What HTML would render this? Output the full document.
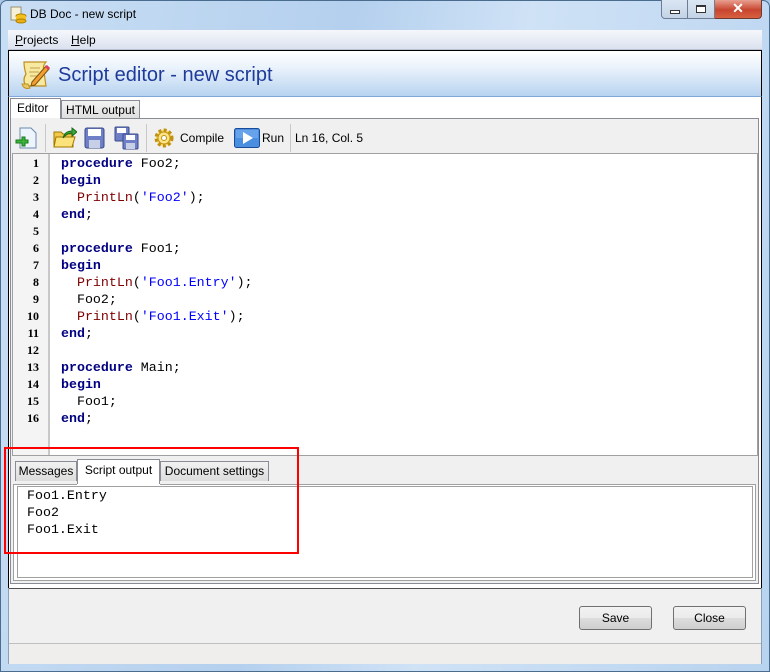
<!DOCTYPE html>
<html><head><meta charset="utf-8"><style>
*{box-sizing:border-box;margin:0;padding:0}
body{width:770px;height:672px;overflow:hidden;font-family:"Liberation Sans",sans-serif;font-size:12px;position:relative;background:#a9c8e8}
.frame{position:absolute;left:0;top:0;width:770px;height:672px;border:1px solid #4a6c8e;border-radius:7px 7px 0 0;background:linear-gradient(100deg,#c9def4 0%,#b4d0ee 40%,#cfe2f6 60%,#b8d3ef 100%)}
.abs{position:absolute}
.title{left:30px;top:7px;font-size:12px;color:#000}
.client{left:8px;top:30px;width:754px;height:634px;background:#f0f0f0;border:1px solid #8aa0b8}
.menu{left:8px;top:30px;width:754px;height:20px;background:linear-gradient(#f5f7fb,#dbe2ef);border-bottom:1px solid #b8c2d2}
.menu span{position:absolute;top:3px;font-size:12px}
.header{left:8px;top:50px;width:754px;height:47px;border:1px solid #000;border-bottom:none;background:linear-gradient(#fff 0%,#e8f1fb 40%,#b7d3f0 100%);border-bottom:1px solid #7fa8d8}
.white{left:8px;top:97px;width:754px;height:491px;background:#fff;border-left:1px solid #000;border-right:1px solid #000}
.code{font-family:"Liberation Mono",monospace;font-size:13.3px;line-height:17px;white-space:pre;color:#000}
.k{color:#000080;font-weight:bold}.f{color:#800000}.s{color:#0000ff}
.btn{height:24px;border:1px solid #707070;border-radius:3px;background:linear-gradient(#f2f2f2 0%,#ebebeb 50%,#dddddd 51%,#cfcfcf 100%);text-align:center;line-height:22px;font-size:12px}
.tab{height:20px;border:1px solid #898c95;border-bottom:none;background:linear-gradient(#f2f2f2,#dcdcdc);font-size:12px;text-align:center;line-height:19px}
</style></head><body>
<div class="frame"></div>
<!-- title icon -->
<svg class="abs" style="left:9px;top:6px" width="18" height="18"><rect x="2" y="1" width="10" height="13" fill="#f5f0d8" stroke="#9a9070"/><ellipse cx="12" cy="10" rx="5" ry="2" fill="#f4c020" stroke="#b08000"/><rect x="7" y="10" width="10" height="5" fill="#f4c020"/><ellipse cx="12" cy="15" rx="5" ry="2" fill="#e8b010" stroke="#b08000"/></svg>
<div class="abs title">DB Doc - new script</div>
<!-- caption buttons -->
<div class="abs" style="left:661px;top:0;width:27px;height:19px;border:1px solid #6d7d93;border-top:none;border-radius:0 0 0 4px;background:linear-gradient(#dbe6f3,#c3d3e6)"><div class="abs" style="left:8px;top:10px;width:10px;height:4px;border:1px solid #333;background:#fff"></div></div>
<div class="abs" style="left:688px;top:0;width:27px;height:19px;border:1px solid #6d7d93;border-top:none;border-left:none;background:linear-gradient(#dbe6f3,#c3d3e6)"><div class="abs" style="left:8px;top:5px;width:10px;height:8px;border:1px solid #333;border-top-width:2px;background:#fff"></div></div>
<div class="abs" style="left:715px;top:0;width:47px;height:19px;border:1px solid #6d3a30;border-top:none;border-left:none;border-radius:0 0 4px 0;background:linear-gradient(#e8a090,#c84530 55%,#d86040);color:#fff;font-weight:bold;text-align:center;font-size:14px;line-height:17px">✕</div>

<div class="abs client"></div>
<div class="abs menu"><span style="left:7px"><u>P</u>rojects</span><span style="left:63px"><u>H</u>elp</span></div>
<div class="abs header"></div>
<!-- scroll icon -->
<svg class="abs" style="left:18px;top:58px" width="34" height="34"><path d="M6 4 H28 Q24 8 26 14 L28 28 H8 Q4 22 8 16 Q6 10 6 4Z" fill="#f7e9a0" stroke="#c09020" stroke-width="1.2"/><path d="M4 26 Q6 32 12 30 L10 26Z" fill="#e8c860" stroke="#c09020"/><path d="M12 10 H22 M11 14 H21 M12 18 H20" stroke="#c0a050"/><path d="M14 24 L28 8 L31 11 L17 27 L13 28Z" fill="#f0a030" stroke="#805010"/><path d="M28 8 L31 11" stroke="#e04060" stroke-width="3"/></svg>
<div class="abs" style="left:58px;top:64px;font-size:20px;color:#1e3a9a">Script editor - new script</div>
<div class="abs white"></div>
<!-- tabs -->
<div class="abs tab" style="left:61px;top:100px;width:79px">HTML output</div>
<div class="abs" style="left:10px;top:98px;width:51px;height:21px;background:#fff;border:1px solid #898c95;border-bottom:none;font-size:12px;line-height:19px;padding-left:6px">Editor</div>
<!-- panel -->
<div class="abs" style="left:10px;top:118px;width:749px;height:466px;border:1px solid #898c95;border-top:none;background:#f0f0f0"></div>
<div class="abs" style="left:60px;top:118px;width:699px;height:1px;background:#898c95"></div>
<!-- toolbar -->
<div class="abs" style="left:11px;top:120px;width:747px;height:34px;background:#f0f0f0"></div>
<div class="abs" style="left:45px;top:124px;width:1px;height:28px;background:#c8c8c8"></div>
<div class="abs" style="left:146px;top:124px;width:1px;height:28px;background:#c8c8c8"></div>
<div class="abs" style="left:290px;top:124px;width:1px;height:28px;background:#c8c8c8"></div>
<svg class="abs" style="left:15px;top:126px" width="24" height="24"><path d="M5 2 H16 L21 7 V22 H5Z" fill="#eef4fb" stroke="#6a8ab0"/><path d="M2 14 H8 V11 H11 V14 H14 V17 H11 V20 H8 V17 H2Z" transform="translate(-1,0)" fill="#3ab53a" stroke="#1a7a1a"/></svg>
<svg class="abs" style="left:53px;top:126px" width="24" height="24"><path d="M1 6 H8 L10 8 H20 V21 H1Z" fill="#f2c84a" stroke="#a07800"/><path d="M3 11 H22 L19 21 H1Z" fill="#fce27a" stroke="#a07800"/><path d="M10 12 Q12 5 19 5 V2 L24 6 L19 10 V7 Q14 7 10 12Z" fill="#3aa83a" stroke="#1a6a1a"/></svg>
<svg class="abs" style="left:84px;top:127px" width="22" height="22"><rect x="1" y="1" width="19" height="20" rx="2" fill="#6e7fc8" stroke="#3a4a8a"/><rect x="4" y="2" width="13" height="7" fill="#fff"/><rect x="5" y="13" width="11" height="8" fill="#c8d0e8"/></svg>
<svg class="abs" style="left:114px;top:126px" width="26" height="24"><rect x="1" y="1" width="14" height="14" rx="1" fill="#6e7fc8" stroke="#3a4a8a"/><rect x="3" y="2" width="9" height="5" fill="#fff"/><rect x="9" y="8" width="15" height="15" rx="1" fill="#6e7fc8" stroke="#3a4a8a"/><rect x="12" y="9" width="9" height="5" fill="#fff"/><rect x="12" y="17" width="9" height="6" fill="#c8d0e8"/></svg>
<svg class="abs" style="left:152px;top:127px" width="24" height="22"><circle cx="12" cy="11" r="8" fill="#f8d860" stroke="#c09010" stroke-width="3" stroke-dasharray="3 2.3"/><circle cx="12" cy="11" r="6" fill="#fbe588" stroke="#c09010"/><circle cx="12" cy="11" r="2.5" fill="#fff" stroke="#c09010"/></svg>
<div class="abs" style="left:180px;top:131px;font-size:12px">Compile</div>
<svg class="abs" style="left:234px;top:128px" width="26" height="20"><rect x="0.5" y="0.5" width="25" height="19" rx="2" fill="#4a8ee0" stroke="#1a4a9a"/><rect x="2" y="2" width="22" height="8" fill="#7ab0f0" opacity=".6"/><path d="M9 4 L19 10 L9 16Z" fill="#fff"/></svg>
<div class="abs" style="left:262px;top:131px;font-size:12px">Run</div>
<div class="abs" style="left:295px;top:131px;font-size:12px">Ln 16, Col. 5</div>
<!-- editor -->
<div class="abs" style="left:12px;top:153px;width:746px;height:303px;border:1px solid #a0a0a0;background:#fff"></div>
<div class="abs" style="left:13px;top:154px;width:37px;height:301px;background:#f4f4f4;border-right:2px solid #c8c8c8"></div>
<div class="abs" style="left:13px;top:155px;width:26px;text-align:right;font-family:'Liberation Serif',serif;font-weight:bold;font-size:12px;line-height:17px">1<br>2<br>3<br>4<br>5<br>6<br>7<br>8<br>9<br>10<br>11<br>12<br>13<br>14<br>15<br>16</div>
<div class="abs code" style="left:61px;top:155px"><span class="k">procedure</span> Foo2;
<span class="k">begin</span>
  <span class="f">PrintLn</span>(<span class="s">'Foo2'</span>);
<span class="k">end</span>;

<span class="k">procedure</span> Foo1;
<span class="k">begin</span>
  <span class="f">PrintLn</span>(<span class="s">'Foo1.Entry'</span>);
  Foo2;
  <span class="f">PrintLn</span>(<span class="s">'Foo1.Exit'</span>);
<span class="k">end</span>;

<span class="k">procedure</span> Main;
<span class="k">begin</span>
  Foo1;
<span class="k">end</span>;</div>
<!-- bottom tabs -->
<div class="abs tab" style="left:15px;top:461px;width:62px">Messages</div>
<div class="abs tab" style="left:160px;top:461px;width:109px">Document settings</div>
<div class="abs" style="left:77px;top:459px;width:83px;height:26px;background:#fff;border:1px solid #898c95;border-bottom:none;font-size:12px;text-align:center;line-height:20px">Script output</div>
<div class="abs" style="left:13px;top:484px;width:743px;height:97px;border:1px solid #a0a0a0;background:#fff"></div>
<div class="abs" style="left:77px;top:484px;width:83px;height:2px;background:#fff"></div>
<div class="abs" style="left:17px;top:486px;width:736px;height:92px;border:1px solid #a0a0a0"></div>
<div class="abs code" style="left:27px;top:487px;line-height:17px">Foo1.Entry
Foo2
Foo1.Exit</div>
<!-- bottom -->
<div class="abs" style="left:9px;top:588px;width:752px;height:1px;background:#505050"></div>
<div class="abs btn" style="left:579px;top:606px;width:73px">Save</div>
<div class="abs btn" style="left:673px;top:606px;width:73px">Close</div>
<div class="abs" style="left:9px;top:643px;width:752px;height:21px;background:#f0eded;border-top:1px solid #c0c0c0"></div>
<!-- red highlight -->
<div class="abs" style="left:4px;top:447px;width:295px;height:107px;border:2px solid #ff0000"></div>
</body></html>
